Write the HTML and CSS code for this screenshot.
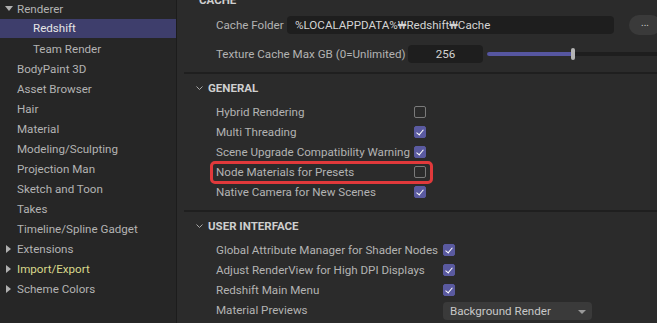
FILE: index.html
```html
<!DOCTYPE html>
<html lang="ko">
<head>
    <meta charset="UTF-8">
    <title>Preferences - Redshift</title>
    <link rel="stylesheet" href="styles.css">
</head>
<body>
    <div class="app">
        <div class="sidebar">
            <div class="nav-item"><span class="arrow down"></span>Renderer</div>
            <div class="nav-item sub selected">Redshift</div>
            <div class="nav-item sub">Team Render</div>
            <div class="nav-item">BodyPaint 3D</div>
            <div class="nav-item">Asset Browser</div>
            <div class="nav-item">Hair</div>
            <div class="nav-item">Material</div>
            <div class="nav-item">Modeling/Sculpting</div>
            <div class="nav-item">Projection Man</div>
            <div class="nav-item">Sketch and Toon</div>
            <div class="nav-item">Takes</div>
            <div class="nav-item">Timeline/Spline Gadget</div>
            <div class="nav-item"><span class="arrow right"></span>Extensions</div>
            <div class="nav-item highlight"><span class="arrow right"></span>Import/Export</div>
            <div class="nav-item"><span class="arrow right"></span>Scheme Colors</div>
        </div>

        <div class="main">
            <div class="section cache">
                <div class="section-title plain">CACHE</div>
                <div class="field-row">
                    <span class="label folder-label">Cache Folder</span>
                    <div class="text-input folder">%LOCALAPPDATA%₩Redshift₩Cache</div>
                    <div class="dots-btn">...</div>
                </div>
                <div class="field-row">
                    <span class="label texture-label">Texture Cache Max GB (0=Unlimited)</span>
                    <div class="text-input number">256</div>
                    <div class="slider">
                        <div class="slider-fill" style="width: 86px;"></div>
                        <div class="slider-handle"></div>
                    </div>
                </div>
            </div>

            <div class="section general">
                <div class="section-title">
                    <svg class="chevron" width="7" height="5" viewBox="0 0 7 5"><polyline points="0.5,0.5 3.5,3.5 6.5,0.5" fill="none" stroke="#a8a8a8" stroke-width="1"/></svg>
                    GENERAL
                </div>
                <div class="options">
                    <span class="label">Hybrid Rendering</span><span class="check"></span>
                    <span class="label">Multi Threading</span><span class="check on"></span>
                    <span class="label">Scene Upgrade Compatibility Warning</span><span class="check on"></span>
                    <span class="label marked">Node Materials for Presets</span><span class="check"></span>
                    <span class="label">Native Camera for New Scenes</span><span class="check on"></span>
                </div>
            </div>

            <div class="section ui">
                <div class="section-title">
                    <svg class="chevron" width="7" height="5" viewBox="0 0 7 5"><polyline points="0.5,0.5 3.5,3.5 6.5,0.5" fill="none" stroke="#a8a8a8" stroke-width="1"/></svg>
                    USER INTERFACE
                </div>
                <div class="options wide">
                    <span class="label">Global Attribute Manager for Shader Nodes</span><span class="check on"></span>
                    <span class="label">Adjust RenderView for High DPI Displays</span><span class="check on"></span>
                    <span class="label">Redshift Main Menu</span><span class="check on"></span>
                    <span class="label">Material Previews</span>
                    <div class="dropdown">Background Render<span class="caret"></span></div>
                </div>
            </div>
        </div>
    </div>
</body>
</html>
```

FILE: styles.css
```css
body {
    margin: 0;
    background: #2b2b2b;
    font-family: Roboto, "Noto Sans CJK KR", sans-serif;
    font-size: 11.6px;
    color: #b3b3b3;
    overflow: hidden;
}
.app {
    display: flex;
    height: 323px;
}

/* left tree */
.sidebar {
    flex-shrink: 0;
    width: 176px;
    background: #262626;
    border-right: 1px solid #1c1c1c;
    margin-top: -1px;
}
.nav-item {
    position: relative;
    height: 20px;
    line-height: 20px;
    padding-left: 17px;
    white-space: nowrap;
}
.nav-item.sub {
    padding-left: 33px;
}
.nav-item.selected {
    background: #3e3e6c;
    color: #e6e6e6;
    height: 19px;
    line-height: 19px;
    margin-bottom: 1px;
}
.nav-item.highlight {
    color: #d9d98c;
}
.arrow {
    position: absolute;
    left: 5px;
    top: 7px;
    width: 0;
    height: 0;
}
.arrow.down {
    border-left: 4px solid transparent;
    border-right: 4px solid transparent;
    border-top: 5px solid #b0b0b0;
}
.arrow.right {
    left: 6px;
    top: 6px;
    border-top: 4px solid transparent;
    border-bottom: 4px solid transparent;
    border-left: 5px solid #b0b0b0;
}

/* settings */
.main {
    flex: 1;
    min-width: 0;
    overflow: hidden;
    margin-top: -10px;
}
.section {
    margin-left: 7px;
    padding-left: 9px;
    padding-top: 4px;
}
.cache {
    padding-left: 0;
    padding-top: 0;
    padding-bottom: 4px;
    border-bottom: 2px solid #1f1f1f;
}
.section-title {
    display: flex;
    align-items: center;
    gap: 5px;
    height: 20px;
    font-weight: bold;
    color: #cfcfcf;
    font-size: 11.5px;
    padding-left: 3px;
}
.section-title.plain {
    padding-left: 15px;
}
.chevron {
    display: block;
}
.field-row {
    display: flex;
    align-items: center;
    height: 29px;
    padding-left: 32px;
    gap: 6px;
}
.folder-label {
    width: 65px;
}
.texture-label {
    width: 186px;
}
.text-input {
    flex-shrink: 0;
    background: #1e1e1e;
    border-radius: 4px;
    height: 18px;
    line-height: 18px;
    color: #d4d4d4;
}
.text-input.folder {
    width: 319px;
    padding-left: 8px;
}
.text-input.number {
    width: 75px;
    text-align: center;
}
.dots-btn {
    flex-shrink: 0;
    width: 32px;
    height: 20px;
    border-radius: 10px;
    background: #3a3a3a;
    color: #d0d0d0;
    font-size: 10px;
    line-height: 16px;
    text-align: center;
    margin-left: 9px;
}
.slider {
    position: relative;
    flex: 1;
    height: 4px;
    background: #1e1e1e;
    margin-left: -2px;
    border-radius: 2px 0 0 2px;
}
.slider-fill {
    height: 4px;
    background: #5656a0;
    border-radius: 2px;
}
.slider-handle {
    position: absolute;
    left: 84px;
    top: -4px;
    width: 4px;
    height: 12px;
    border-radius: 2px;
    background: #b4b4b4;
}

.general {
    padding-bottom: 8px;
    border-bottom: 2px solid #1f1f1f;
}
.options {
    display: grid;
    grid-template-columns: 198px auto;
    grid-auto-rows: 20px;
    align-items: center;
    justify-items: start;
    padding-left: 23px;
    margin-top: 4px;
}
.options.wide {
    grid-template-columns: 227px auto;
}
.label {
    white-space: nowrap;
    line-height: 20px;
}
.label.marked {
    position: relative;
}
.label.marked::after {
    content: "";
    position: absolute;
    left: -6px;
    top: -1px;
    width: 217px;
    height: 17px;
    border: 3px solid #e0393b;
    border-radius: 5px;
}
.check {
    width: 10px;
    height: 10px;
    border: 1px solid #7a7a7a;
    border-radius: 2px;
}
.check.on {
    background: #5a5aa0;
    border-color: #5a5aa0;
    position: relative;
}
.check.on::after {
    content: "";
    position: absolute;
    left: 3px;
    top: 1px;
    width: 3px;
    height: 6px;
    border-right: 1.5px solid #fff;
    border-bottom: 1.5px solid #fff;
    transform: rotate(40deg);
}
.dropdown {
    position: relative;
    width: 142px;
    height: 18px;
    line-height: 18px;
    background: #3a3a3a;
    border-radius: 4px;
    padding-left: 7px;
    color: #c8c8c8;
    margin-top: 2px;
}
.caret {
    position: absolute;
    right: 6px;
    top: 8px;
    border-left: 4px solid transparent;
    border-right: 4px solid transparent;
    border-top: 4px solid #9a9a9a;
}
```
